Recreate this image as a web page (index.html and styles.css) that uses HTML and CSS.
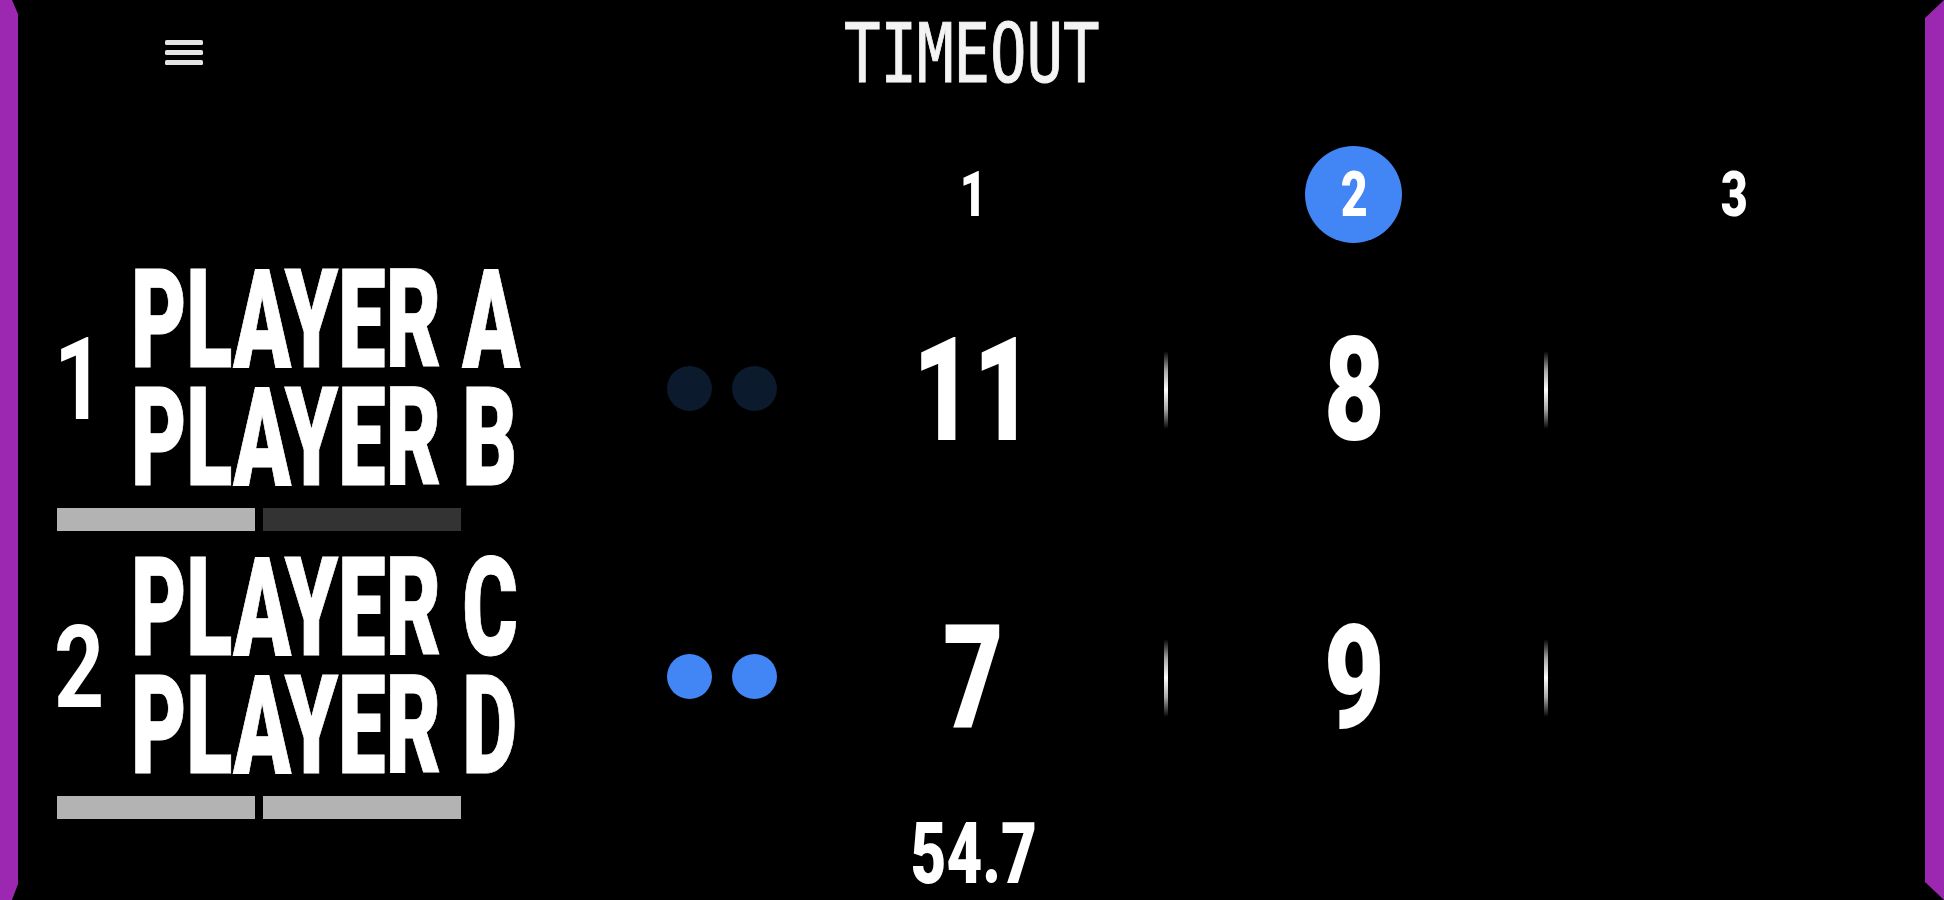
FILE: index.html
```html
<!DOCTYPE html>
<html lang="en">
<head>
<meta charset="utf-8">
<title>Scoreboard</title>
<link rel="stylesheet" href="styles.css">
</head>
<body>
<div class="frame">
  <div class="bezel bezel-left"></div>
  <main class="board">
    <header class="topbar">
      <button class="menu" type="button" aria-label="Menu">
        <svg width="38" height="27" viewBox="0 0 38 27" aria-hidden="true">
          <rect x="0" y="1" width="38" height="5" rx="1.5" fill="#e4e4e4"/>
          <rect x="0" y="11" width="38" height="5" rx="1.5" fill="#e4e4e4"/>
          <rect x="0" y="21" width="38" height="5" rx="1.5" fill="#e4e4e4"/>
        </svg>
      </button>
      <h1 class="status"><span class="status-text">TIMEOUT</span></h1>
      <div class="topbar-end"></div>
    </header>

    <div class="row head">
      <div></div>
      <div></div>
      <div class="game"><span class="gnum"><span class="digit">1</span></span></div>
      <div class="game"><span class="gnum current"><span class="digit">2</span></span></div>
      <div class="game"><span class="gnum"><span class="digit">3</span></span></div>
    </div>

    <div class="row team">
      <div class="side">
        <div class="side-top">
          <span class="seed"><span class="seed-digit">1</span></span>
          <div class="names">
            <span class="name">PLAYER A</span>
            <span class="name">PLAYER B</span>
          </div>
        </div>
        <div class="bars"><span class="bar on"></span><span class="bar off"></span></div>
      </div>
      <div class="serve"><span class="dot dim"></span><span class="dot dim"></span></div>
      <div class="cell"><span class="score">11</span></div>
      <div class="cell"><i class="divider"></i><span class="score">8</span></div>
      <div class="cell"><i class="divider"></i><span class="score"></span></div>
    </div>

    <div class="row team">
      <div class="side">
        <div class="side-top">
          <span class="seed"><span class="seed-digit">2</span></span>
          <div class="names">
            <span class="name">PLAYER C</span>
            <span class="name">PLAYER D</span>
          </div>
        </div>
        <div class="bars"><span class="bar on"></span><span class="bar on"></span></div>
      </div>
      <div class="serve"><span class="dot lit"></span><span class="dot lit"></span></div>
      <div class="cell"><span class="score">7</span></div>
      <div class="cell"><i class="divider"></i><span class="score">9</span></div>
      <div class="cell"><i class="divider"></i><span class="score"></span></div>
    </div>

    <div class="row foot">
      <div></div>
      <div></div>
      <div class="clock-cell"><span class="clock">54.7</span></div>
    </div>
  </main>
  <div class="bezel bezel-right"></div>
</div>
</body>
</html>
```

FILE: styles.css
```css
* { box-sizing: border-box; }

html, body {
  margin: 0;
  padding: 0;
  background: #000;
  color: #fff;
  width: 1944px;
  height: 900px;
  overflow: hidden;
  font-family: Roboto, "Liberation Sans", sans-serif;
}

.frame {
  display: flex;
  width: 1944px;
  height: 900px;
}

.bezel {
  background: #9c27b0;
  flex: none;
}

.bezel-left {
  width: 18px;
  clip-path: polygon(0 0, 12px 0, 18px 14px, 18px 884px, 12px 900px, 0 900px);
}

.bezel-right {
  width: 19px;
  clip-path: polygon(0 18px, 19px 0, 19px 900px, 0 882px);
}

.board {
  flex: 1;
  display: flex;
  flex-direction: column;
  min-width: 0;
}

/* top bar */
.topbar {
  height: 104px;
  display: grid;
  grid-template-columns: 1fr auto 1fr;
  align-items: center;
}

.menu {
  justify-self: start;
  margin-left: 147px;
  padding: 0;
  border: 0;
  background: none;
  display: flex;
  cursor: pointer;
}

.status {
  margin: 0;
  padding-top: 3px;
  font-family: "DejaVu Sans Mono", "Liberation Mono", monospace;
  font-weight: normal;
  font-size: 82px;
  line-height: 82px;
  color: #f4f4f4;
}

.status-text {
  display: inline-block;
  transform: scaleX(0.74);
  transform-origin: center;
  -webkit-text-stroke: 1px #f4f4f4;
}

/* shared grid */
.row {
  display: grid;
  grid-template-columns: 642px 123px repeat(3, 1fr);
}

/* game header */
.head {
  margin-top: 42px;
  height: 97px;
  align-items: center;
}

.game {
  display: flex;
  justify-content: center;
  align-items: center;
}

.gnum {
  width: 97px;
  height: 97px;
  border-radius: 50%;
  display: flex;
  justify-content: center;
  align-items: center;
  font-weight: 900;
  font-size: 63px;
  line-height: 1;
}

.gnum.current {
  background: #4285f4;
}

.digit {
  display: inline-block;
  transform: scaleX(0.74);
}

/* team rows */
.team {
  margin-top: 18px;
  align-items: center;
}

.side {
  padding-left: 39px;
}

.side-top {
  display: flex;
  align-items: center;
}

.seed {
  flex: none;
  width: 44px;
  display: flex;
  justify-content: center;
  font-weight: 700;
  font-size: 115px;
  line-height: 1;
}

.seed-digit {
  display: inline-block;
  transform: scaleX(0.76);
}

.names {
  margin-left: 30px;
  display: flex;
  flex-direction: column;
}

.name {
  display: block;
  white-space: nowrap;
  font-weight: 900;
  font-size: 137px;
  line-height: 118px;
  transform: scaleX(0.62);
  transform-origin: left center;
  -webkit-text-stroke: 1px #fff;
}

.bars {
  margin-top: 11px;
  display: flex;
  gap: 8px;
}

.bar {
  width: 198px;
  height: 23px;
}

.bar.on { background: #b3b3b3; }
.bar.off { background: #333333; }

.serve {
  display: flex;
  justify-content: center;
  gap: 20px;
  padding-bottom: 16px;
}

.dot {
  width: 45px;
  height: 45px;
  border-radius: 50%;
}

.dot.dim { background: #0c1a2d; }
.dot.lit { background: #4285f4; }

.cell {
  display: flex;
  align-items: center;
  padding-bottom: 12px;
  height: 100%;
}

.divider {
  flex: none;
  width: 4px;
  height: 78px;
  border-radius: 2px;
  background: linear-gradient(to bottom,
    rgba(255,255,255,0) 0%,
    rgba(255,255,255,0.65) 25%,
    #ffffff 50%,
    rgba(255,255,255,0.65) 75%,
    rgba(255,255,255,0) 100%);
}

.cell .divider + .score {
  margin-right: 4px;
}

.score {
  flex: 1;
  text-align: center;
  font-weight: 900;
  font-size: 145px;
  line-height: 1;
  transform: scaleX(0.72);
}

/* footer clock */
.clock-cell {
  text-align: center;
}

.clock {
  display: inline-block;
  font-weight: 900;
  font-size: 86px;
  line-height: 70px;
  transform: scaleX(0.72);
}
```
